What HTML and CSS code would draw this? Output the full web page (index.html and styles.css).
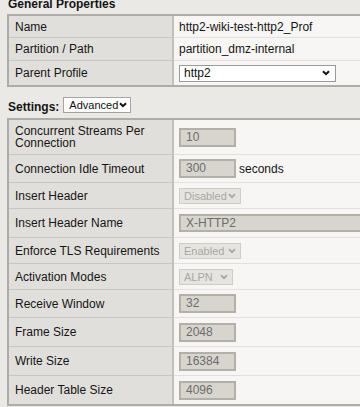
FILE: index.html
```html
<!DOCTYPE HTML>
<html lang="en">
<head>
    <title>HTTP/2 Profile</title>
    <link rel="stylesheet" href="styles.css">
</head>
<body>

<h2 class="section-title">General Properties</h2>
<div class="props-box">
    <div class="prop-row row-name">
        <div class="prop-label">Name</div>
        <div class="prop-value">http2-wiki-test-http2_Prof</div>
    </div>
    <div class="prop-row row-path">
        <div class="prop-label">Partition / Path</div>
        <div class="prop-value">partition_dmz-internal</div>
    </div>
    <div class="prop-row row-parent">
        <div class="prop-label">Parent Profile</div>
        <div class="prop-value">
            <div class="fake-select parent-select">
                <span>http2</span>
                <svg class="chev" width="8" height="6" viewBox="0 0 8 6"><path d="M1 1.2l3 3 3-3" fill="none" stroke="#111" stroke-width="2"/></svg>
            </div>
        </div>
    </div>
</div>

<div class="settings-bar">
    <span class="settings-label">Settings:</span>
    <div class="fake-select mode-select">
        <span>Advanced</span>
        <svg class="chev" width="8" height="6" viewBox="0 0 8 6"><path d="M1 1.2l3 3 3-3" fill="none" stroke="#111" stroke-width="2"/></svg>
    </div>
</div>

<div class="props-box settings-box">
    <div class="prop-row h34">
        <div class="prop-label">Concurrent Streams Per Connection</div>
        <div class="prop-value"><div class="num-input">10</div></div>
    </div>
    <div class="prop-row h27">
        <div class="prop-label">Connection Idle Timeout</div>
        <div class="prop-value"><div class="num-input">300</div><span class="unit">seconds</span></div>
    </div>
    <div class="prop-row h25">
        <div class="prop-label">Insert Header</div>
        <div class="prop-value">
            <div class="off-select w62"><span>Disabled</span>
                <svg class="chev" width="8" height="6" viewBox="0 0 8 6"><path d="M1 1.2l3 3 3-3" fill="none" stroke="#a9a7a3" stroke-width="1.8"/></svg>
            </div>
        </div>
    </div>
    <div class="prop-row h28">
        <div class="prop-label">Insert Header Name</div>
        <div class="prop-value"><div class="num-input wide-input">X-HTTP2</div></div>
    </div>
    <div class="prop-row h25">
        <div class="prop-label">Enforce TLS Requirements</div>
        <div class="prop-value">
            <div class="off-select w62"><span>Enabled</span>
                <svg class="chev" width="8" height="6" viewBox="0 0 8 6"><path d="M1 1.2l3 3 3-3" fill="none" stroke="#a9a7a3" stroke-width="1.8"/></svg>
            </div>
        </div>
    </div>
    <div class="prop-row h25">
        <div class="prop-label">Activation Modes</div>
        <div class="prop-value">
            <div class="off-select w54"><span>ALPN</span>
                <svg class="chev" width="8" height="6" viewBox="0 0 8 6"><path d="M1 1.2l3 3 3-3" fill="none" stroke="#a9a7a3" stroke-width="1.8"/></svg>
            </div>
        </div>
    </div>
    <div class="prop-row h27">
        <div class="prop-label">Receive Window</div>
        <div class="prop-value"><div class="num-input">32</div></div>
    </div>
    <div class="prop-row h28">
        <div class="prop-label">Frame Size</div>
        <div class="prop-value"><div class="num-input">2048</div></div>
    </div>
    <div class="prop-row h28">
        <div class="prop-label">Write Size</div>
        <div class="prop-value"><div class="num-input">16384</div></div>
    </div>
    <div class="prop-row h28">
        <div class="prop-label">Header Table Size</div>
        <div class="prop-value"><div class="num-input">4096</div></div>
    </div>
</div>

</body>
</html>
```

FILE: styles.css
```css
body {
    margin: 0;
    background-color: #ebe9e6;
    color: #151515;
    font-family: 'Liberation Sans', Arial, sans-serif;
    font-size: 12px;
    overflow: hidden;
}

.section-title {
    font-size: 12px;
    font-weight: bold;
    line-height: 14px;
    margin: -3px 0 3px 8px;
}

.props-box {
    margin-left: 7px;
    width: 440px;
    border: 2px solid #aeaca8;
    background-color: #f7f6f4;
}

.prop-row {
    display: grid;
    grid-template-columns: 165px 1fr;
    border-bottom: 1px solid #e2e0dd;
}

.prop-row:last-child {
    border-bottom: none;
}

.prop-label {
    background-color: #e1dfdc;
    border-right: 2px solid #c2c0bc;
    border-bottom: 1px solid #c8c6c2;
    margin-bottom: -1px;
    padding: 0 10px 0 6px;
    display: flex;
    align-items: center;
    line-height: 12px;
}

.prop-row:last-child .prop-label {
    border-bottom: none;
    margin-bottom: 0;
}

.prop-value {
    display: flex;
    align-items: center;
    padding-left: 5px;
}

.row-name { height: 21px; }
.row-path { height: 22px; }
.row-parent { height: 24px; }

.h34 { height: 34px; }
.h27 { height: 27px; }
.h25 { height: 25px; }
.h28 { height: 28px; }

.chev {
    flex-shrink: 0;
}

/* selects */
.fake-select {
    box-sizing: border-box;
    display: flex;
    align-items: center;
    justify-content: space-between;
    background-color: #fff;
    border: 1px solid #9a9a9a;
    padding: 0 5px 0 4px;
    color: #111;
}

.parent-select {
    width: 157px;
    height: 17px;
}

.settings-bar {
    display: flex;
    align-items: center;
    gap: 4px;
    margin: 10px 0 5px 8px;
    height: 16px;
}

.settings-label {
    font-weight: bold;
    margin-top: 3px;
}

.mode-select {
    width: 68px;
    height: 16px;
    padding: 0 3px 0 5px;
    border-color: #a5a5a5;
    font-size: 11px;
}

.off-select {
    box-sizing: border-box;
    height: 16px;
    display: flex;
    align-items: center;
    justify-content: space-between;
    background-color: #e6e4e0;
    border: 1px solid #cfcdc9;
    color: #a9a7a3;
    padding: 0 4px 0 4px;
    font-size: 11px;
}

.w62 { width: 62px; }
.w54 { width: 54px; }

/* inputs */
.num-input {
    box-sizing: border-box;
    width: 57px;
    height: 19px;
    line-height: 15px;
    background-color: #d8d5cf;
    border: 2px solid #b3b0aa;
    color: #6c6c6c;
    padding-left: 5px;
}

.wide-input {
    width: 300px;
    height: 18px;
    line-height: 14px;
}

.unit {
    margin-left: 3px;
    color: #151515;
}
```
